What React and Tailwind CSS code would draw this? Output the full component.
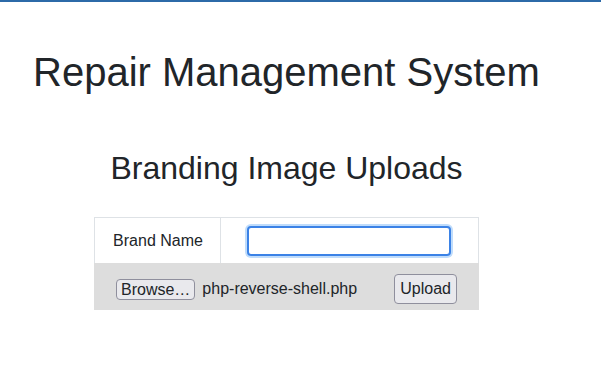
export default function App() {
  return (
    <main
      className="min-h-screen bg-white text-[#212529]"
      style={{ fontFamily: '"Liberation Sans", Arial, sans-serif' }}
    >
      <div className="h-[2px] bg-[#2c6aa8]"></div>

      <h1 className="mt-[46px] pl-[33px] text-[40px] leading-[48px] font-normal">
        Repair Management System
      </h1>

      <div className="flex w-[573px] flex-col items-center">
        <h2 className="mt-[53px] text-[32px] leading-[38px] font-normal">
          Branding Image Uploads
        </h2>

        <div className="mt-[30px] w-[385px] text-base">
          <div className="flex h-[46px] border-x border-t border-[#dee2e6]">
            <div className="flex w-[126px] items-center justify-center border-r border-[#dee2e6] pl-[1px]">
              Brand Name
            </div>
            <div className="flex flex-1 items-center pl-[26px]">
              <input
                type="text"
                className="h-[30px] w-[204px] rounded-[4px] border-2 border-[#3b82e6] bg-white outline-none shadow-[0_0_0_2px_#bfdcfb]"
              />
            </div>
          </div>
          <div className="flex h-[47px] items-center bg-[#dddddd] pl-[22px] pr-[22px]">
            <button className="mt-[5px] h-[21px] rounded-[4px] border border-[#8f8f9d] bg-[#e9e9ed] px-[4px] leading-[19px]">
              Browse…
            </button>
            <span className="ml-[7px] mt-[5px]">php-reverse-shell.php</span>
            <button className="ml-auto mt-[5px] h-[30px] rounded-[4px] border border-[#8f8f9d] bg-[#e9e9ed] px-[5px] leading-[28px]">
              Upload
            </button>
          </div>
        </div>
      </div>
    </main>
  );
}
